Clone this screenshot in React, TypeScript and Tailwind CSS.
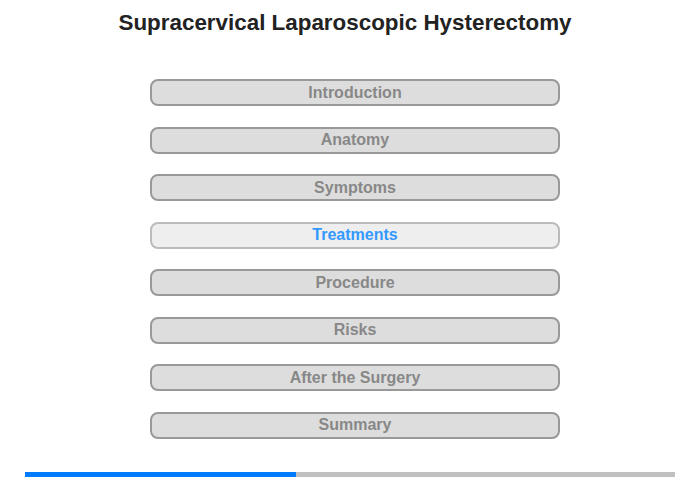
import React from 'react';

const sections = [
  'Introduction',
  'Anatomy',
  'Symptoms',
  'Treatments',
  'Procedure',
  'Risks',
  'After the Surgery',
  'Summary',
];

const activeSection = 'Treatments';
const progress = 41.7;

export default function App() {
  return (
    <div className="w-[700px] h-[480px] bg-white flex flex-col font-['Liberation_Sans',Arial,sans-serif]">
      <h1 className="mt-[10px] mr-[10px] text-center text-[22.4px] leading-[26px] font-bold text-[#222]">
        Supracervical Laparoscopic Hysterectomy
      </h1>

      <div className="mt-[43px] ml-[150px] w-[410px] flex flex-col gap-[20.5px]">
        {sections.map((name) => {
          const active = name === activeSection;
          return (
            <button
              key={name}
              className={
                active
                  ? 'h-[27px] rounded-[8px] border-2 border-[#bbb] bg-[#eee] text-[#3399ff] text-[16px] font-bold leading-none'
                  : 'h-[27px] rounded-[8px] border-2 border-[#999] bg-[#ddd] text-[#888] text-[16px] font-bold leading-none'
              }
            >
              {name}
            </button>
          );
        })}
      </div>

      <div className="mt-auto mb-[3px] mx-[25px] h-[5px] bg-[#c0c0c0] flex">
        <div className="h-full bg-[#007aff]" style={{ width: `${progress}%` }} />
      </div>
    </div>
  );
}
